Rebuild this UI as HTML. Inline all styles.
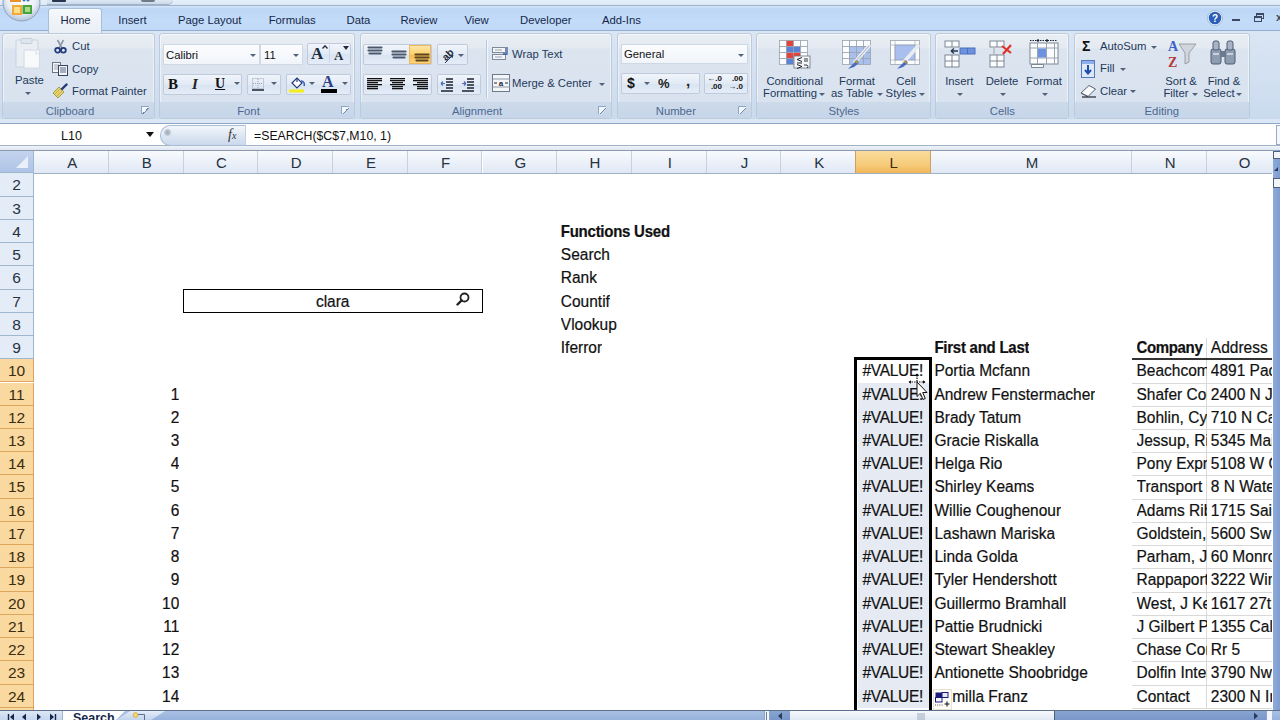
<!DOCTYPE html><html><head><meta charset="utf-8"><style>
*{margin:0;padding:0;box-sizing:border-box}
html,body{width:1280px;height:720px;overflow:hidden;background:#fff;font-family:"Liberation Sans",sans-serif;position:relative}
.a{position:absolute}
.t{position:absolute;white-space:nowrap}
.rb{font-size:11.3px;color:#1e395b}
.grp{position:absolute;top:32.5px;height:86.5px;border:1px solid #bccadb;border-radius:3px;background:linear-gradient(#e9eef4 0%,#e4eaf1 16%,#dbe4ef 18%,#d9e3ef 85%);box-shadow:inset 0 0 0 1px rgba(255,255,255,.5)}
.glab{position:absolute;left:0;right:0;bottom:0;height:16px;background:linear-gradient(#cddaea,#c6d5e9);text-align:center;font-size:11.3px;line-height:18px;color:#4d6890;border-radius:0 0 2px 2px}.glab.l{padding-right:17px}
.launch{position:absolute;right:5px;bottom:4px;width:8px;height:8px;border-left:1px solid #8ba6c8;border-top:1px solid #8ba6c8;background:linear-gradient(135deg,#f3f7fc 50%,#6f87a8 50%,#6f87a8 62%,transparent 62%)}
.btn{position:absolute;border:1px solid #bfcbdc;border-radius:2px;background:linear-gradient(#f1f5fb,#e2eaf5 50%,#d9e4f2 51%,#e4ecf7)}
.dd{position:absolute;width:0;height:0;border-left:3px solid transparent;border-right:3px solid transparent;border-top:3px solid #52617a}
.hdr{position:absolute;top:151px;height:22.3px;padding-left:2px;background:linear-gradient(#f8fafd,#e9eff8 60%,#e0e8f4);border-right:1px solid #c5d1de;text-align:center;font-size:15px;line-height:23px;color:#27313f}
.rh{position:absolute;left:0;width:34px;background:#e4ecf7;border-bottom:1px solid #9eb6ce;border-right:1px solid #9eb6ce;text-align:center;font-size:15.5px;color:#27313f}.rh span{display:inline-block;transform:translateY(-0.5px)}
.rh.s{background:#f9d99f;border-bottom-color:#dca65c;border-right-color:#d9a456;color:#3a2d10}
.c{position:absolute;white-space:nowrap;font-size:15.5px;color:#111;overflow:hidden;-webkit-text-stroke:0.2px #111;transform:scaleY(1.06)}
</style></head><body>

<div class="a" style="left:0;top:0;width:1280px;height:5px;background:linear-gradient(#e6f0fa,#dce9f6)"></div>
<div class="a" style="left:0;top:5px;width:1280px;height:1px;background:#9fb2c8"></div>
<div class="a" style="left:0;top:6px;width:1280px;height:25px;background:linear-gradient(#d6e6f8 0px,#bcd6f5 3px,#c3dcf9 60%,#c0d9f6)"></div>
<div class="a" style="left:47px;top:0;width:126px;height:5px;background:linear-gradient(#dfe8f3,#cbd9ea);border-bottom:1px solid #9fb2cc;border-radius:0 0 8px 0"></div>
<div class="a" style="left:52px;top:0;width:14px;height:2px;background:#27374f;border-radius:0 0 1px 1px"></div>
<div class="a" style="left:141px;top:0;width:14px;height:2px;background:#56606e;border-radius:0 0 3px 3px;opacity:.8"></div>
<svg class="a" style="left:0;top:-15px" width="44" height="38" viewBox="0 0 44 38">
<defs><radialGradient id="ob" cx="50%" cy="40%" r="60%"><stop offset="0" stop-color="#ffffff"/><stop offset="0.65" stop-color="#e9eff7"/><stop offset="1" stop-color="#b3c3d8"/></radialGradient></defs>
<circle cx="21.5" cy="17.5" r="18.5" fill="url(#ob)" stroke="#8fa2ba" stroke-width="1"/>
<rect x="10" y="13" width="11" height="4" fill="#e8922a"/><circle cx="24" cy="15" r="1.5" fill="#3a6fc8"/><circle cx="28" cy="15" r="1.5" fill="#3a6fc8"/>
<rect x="12" y="20" width="10" height="10" fill="#f2a93a"/><rect x="14" y="22" width="6" height="6" fill="#ffe08a"/>
<rect x="22.5" y="20" width="9.5" height="9" fill="#4aa33a"/><rect x="25" y="22" width="5" height="5" fill="#a6dc8e"/>
</svg>
<div class="t rb" style="left:60.5px;top:13px;line-height:14px;color:#15284b">Home</div>
<div class="t rb" style="left:118.3px;top:13px;line-height:14px;color:#15284b">Insert</div>
<div class="t rb" style="left:178px;top:13px;line-height:14px;color:#15284b">Page Layout</div>
<div class="t rb" style="left:268.7px;top:13px;line-height:14px;color:#15284b">Formulas</div>
<div class="t rb" style="left:346.5px;top:13px;line-height:14px;color:#15284b">Data</div>
<div class="t rb" style="left:400.4px;top:13px;line-height:14px;color:#15284b">Review</div>
<div class="t rb" style="left:464.4px;top:13px;line-height:14px;color:#15284b">View</div>
<div class="t rb" style="left:520px;top:13px;line-height:14px;color:#15284b">Developer</div>
<div class="t rb" style="left:602px;top:13px;line-height:14px;color:#15284b">Add-Ins</div>
<svg class="a" style="left:1207px;top:10px" width="16" height="16" viewBox="0 0 16 16"><circle cx="8" cy="8" r="7" fill="#2b5fb8" stroke="#e9f1fb" stroke-width="1.4"/><circle cx="8" cy="8" r="7.6" fill="none" stroke="#8aa2c4" stroke-width=".6"/><text x="8" y="12" font-size="10" font-weight="bold" text-anchor="middle" fill="#fff" font-family="Liberation Sans">?</text></svg>
<div class="a" style="left:1232px;top:19px;width:8px;height:2px;background:#3b4a62"></div>
<div class="a" style="left:1256px;top:13px;width:8px;height:6px;border:1px solid #3b4a62;border-top-width:2px"></div>
<div class="a" style="left:1254px;top:15.5px;width:8px;height:6px;border:1px solid #3b4a62;border-top-width:2px;background:#c3dcf9"></div>
<div class="a" style="left:1276px;top:13px;width:6px;height:9px;font-size:11px;line-height:9px;color:#3b4a62;font-weight:bold">x</div>
<div class="a" style="left:0;top:31px;width:1280px;height:92px;background:linear-gradient(#dbe6f4,#cfdef0 70%,#c9daee);"></div>
<div class="a" style="left:0;top:30.3px;width:1280px;height:1.2px;background:#93add0"></div>
<div class="a" style="left:0;top:119px;width:1280px;height:4px;background:#dbe7f5"></div>
<div class="a" style="left:0;top:123px;width:1280px;height:1px;background:#8ea6c5"></div>
<div class="a" style="left:48px;top:8px;width:54px;height:24.5px;border:1px solid #a9bfd9;border-bottom:none;border-radius:3px 3px 0 0;background:linear-gradient(#f5f8fc,#eaeff5);z-index:2"></div>
<div class="t rb" style="left:60.5px;top:13px;line-height:14px;color:#15284b;z-index:3">Home</div>
<div class="grp" style="left:2px;width:153px"><div class="glab l">Clipboard</div><div class="launch"></div></div>
<div class="grp" style="left:159px;width:196px"><div class="glab l">Font</div><div class="launch"></div></div>
<div class="grp" style="left:359.5px;width:252.10000000000002px"><div class="glab l">Alignment</div><div class="launch"></div></div>
<div class="grp" style="left:616.7px;width:135.29999999999995px"><div class="glab l">Number</div><div class="launch"></div></div>
<div class="grp" style="left:756.4px;width:175.0px"><div class="glab">Styles</div></div>
<div class="grp" style="left:935.3px;width:134.0px"><div class="glab">Cells</div></div>
<div class="grp" style="left:1073.7px;width:176.29999999999995px"><div class="glab">Editing</div></div>
<svg class="a" style="left:15px;top:38px" width="26" height="31" viewBox="0 0 26 31"><rect x="1" y="2" width="22" height="27" rx="1" fill="#e9eef5" stroke="#c9d3de"/><rect x="6" y="0.5" width="11" height="5" rx="1" fill="#dfe5ec" stroke="#c4ced9"/><path d="M9 12 H24.5 V30 H9 Z" fill="#f7f9fb" stroke="#d3dae3"/><path d="M20 12 L24.5 16.5 H20Z" fill="#e3e8ee"/></svg>
<div class="t rb" style="left:15px;top:74.3px;line-height:13px;">Paste</div>
<div class="dd" style="left:25px;top:91.5px;border-top-color:#52617a"></div>
<svg class="a" style="left:54px;top:39px" width="13" height="15" viewBox="0 0 13 15"><path d="M3.5 1 L8 9 M9.5 1 L5 9" stroke="#8e98a6" stroke-width="1.6"/><circle cx="3.6" cy="11.2" r="2.4" fill="none" stroke="#223a7a" stroke-width="1.8"/><circle cx="9.4" cy="11.2" r="2.4" fill="none" stroke="#223a7a" stroke-width="1.8"/></svg>
<div class="t rb" style="left:72px;top:40.3px;line-height:13px;">Cut</div>
<svg class="a" style="left:52px;top:62px" width="17" height="14" viewBox="0 0 17 14"><rect x="0.5" y="0.5" width="8" height="10" fill="#f4f6f9" stroke="#6b7686"/><path d="M2 3h5M2 5h5M2 7h5" stroke="#8b95a3" stroke-width=".8"/><rect x="6.5" y="3.5" width="9" height="10" fill="#f4f6f9" stroke="#34455e"/><path d="M8 6h6M8 8h6M8 10h6" stroke="#445571" stroke-width=".9"/></svg>
<div class="t rb" style="left:72px;top:63.3px;line-height:13px;">Copy</div>
<svg class="a" style="left:52px;top:83px" width="18" height="16" viewBox="0 0 18 16"><path d="M1 10 L7 4 L12 9 L6 15 Z" fill="#e4d26a" stroke="#9a8a34" stroke-width=".8"/><path d="M3 11 L8 6 M5 13 L10 8" stroke="#b9a546" stroke-width=".8"/><path d="M10 6 L14.5 1.5" stroke="#223a7a" stroke-width="2.4" stroke-linecap="round"/></svg>
<div class="t rb" style="left:72px;top:84.8px;line-height:13px;">Format Painter</div>
<div class="a" style="left:163px;top:44px;width:97px;height:21px;border:1px solid #cfd9e6;background:linear-gradient(#fbfcfe,#f1f5fa)"></div>
<div class="t rb" style="left:166px;top:48.6px;line-height:13px;color:#111">Calibri</div>
<div class="dd" style="left:250px;top:54px;border-top-color:#52617a"></div>
<div class="a" style="left:260px;top:44px;width:43px;height:21px;border:1px solid #cfd9e6;background:linear-gradient(#fbfcfe,#f1f5fa)"></div>
<div class="t rb" style="left:264px;top:48.6px;line-height:13px;color:#111">11</div>
<div class="dd" style="left:293px;top:54px;border-top-color:#52617a"></div>
<div class="btn" style="left:307px;top:43px;width:44px;height:22px"></div>
<div class="a" style="left:329px;top:45px;width:1px;height:18px;background:#cbd8ea"></div>
<div class="t" style="left:311px;top:44px;font-family:'Liberation Serif',serif;font-weight:bold;font-size:17px;line-height:20px;color:#1e2b3e">A</div>
<svg class="a" style="left:322px;top:45px" width="6" height="4" viewBox="0 0 6 4"><path d="M0.5 3.5 L3 0.8 L5.5 3.5" fill="none" stroke="#1e2b3e" stroke-width="1.3"/></svg>
<div class="t" style="left:334px;top:48px;font-family:'Liberation Serif',serif;font-weight:bold;font-size:13px;line-height:16px;color:#1e2b3e">A</div>
<svg class="a" style="left:343px;top:46px" width="6" height="4" viewBox="0 0 6 4"><path d="M0 0 L6 0 L3 4Z" fill="#1e2b3e"/></svg>
<div class="btn" style="left:163px;top:74px;width:79px;height:21px"></div>
<div class="t" style="left:168px;top:75px;font-family:'Liberation Serif',serif;font-weight:bold;font-size:15px;line-height:18px;color:#111">B</div>
<div class="t" style="left:192px;top:75px;font-family:'Liberation Serif',serif;font-style:italic;font-weight:bold;font-size:15px;line-height:18px;color:#222">I</div>
<div class="t" style="left:215px;top:75px;font-family:'Liberation Serif',serif;font-weight:bold;font-size:14px;line-height:18px;color:#111;text-decoration:underline">U</div>
<div class="dd" style="left:234px;top:82px;border-top-color:#52617a"></div>
<div class="btn" style="left:247px;top:74px;width:34px;height:21px"></div>
<svg class="a" style="left:252px;top:78px" width="12" height="13" viewBox="0 0 12 13"><rect x="0.5" y="0.5" width="11" height="10" fill="none" stroke="#98a6b8" stroke-dasharray="1 1"/><path d="M6 1v9M1 5.5h10" stroke="#98a6b8" stroke-dasharray="1 1"/><path d="M0 12h12" stroke="#1b2433" stroke-width="1.5"/></svg>
<div class="dd" style="left:271px;top:82px;border-top-color:#52617a"></div>
<div class="btn" style="left:286px;top:74px;width:65px;height:21px"></div>
<svg class="a" style="left:288px;top:76px" width="18" height="17" viewBox="0 0 18 17"><path d="M4 7 L9 2 L14 7 L9 12 Z" fill="#fff" stroke="#223a7a" stroke-width="1.2"/><path d="M9 2 V6" stroke="#223a7a" stroke-width="1.2"/><path d="M13 5 C16 5 17 8 16 10" stroke="#3b5fc4" stroke-width="1.6" fill="none"/><rect x="1" y="13.5" width="15" height="3" fill="#f3ee1a"/></svg>
<div class="dd" style="left:309px;top:82px;border-top-color:#52617a"></div>
<div class="t" style="left:322px;top:73px;font-family:'Liberation Serif',serif;font-weight:bold;font-size:16px;line-height:17px;color:#2a3f86">A</div>
<div class="a" style="left:321px;top:88.5px;width:16px;height:4px;background:#000"></div>
<div class="dd" style="left:342px;top:82px;border-top-color:#52617a"></div>
<div class="btn" style="left:363px;top:44px;width:69px;height:21px"></div>
<div class="a" style="left:409px;top:45px;width:22px;height:19px;background:linear-gradient(#fde6a8,#fbcf6a 50%,#f7b94a 51%,#fcd57f);border:1px solid #f0b75a"></div>
<svg class="a" style="left:367px;top:46px" width="16" height="10" viewBox="0 0 16 10"><path d="M1.5 1.5h13M1.5 4.5h13M2.5 7.5h11" stroke="#4a586e" stroke-width="2.2" stroke-linecap="round"/></svg>
<svg class="a" style="left:391px;top:50px" width="16" height="10" viewBox="0 0 16 10"><path d="M1.5 1.5h13M1.5 4.5h13M2.5 7.5h11" stroke="#4a586e" stroke-width="2.2" stroke-linecap="round"/></svg>
<svg class="a" style="left:414px;top:53px" width="16" height="10" viewBox="0 0 16 10"><path d="M1.5 1.5h13M1.5 4.5h13M2.5 7.5h11" stroke="#5b4620" stroke-width="2.2" stroke-linecap="round"/></svg>
<div class="btn" style="left:437px;top:44px;width:31px;height:21px"></div>
<svg class="a" style="left:439px;top:46px" width="22" height="18" viewBox="0 0 22 18"><g transform="rotate(-45 9 9)"><text x="9" y="12" font-size="10" font-weight="bold" text-anchor="middle" fill="#1d2533" font-family="Liberation Sans">ab</text></g><path d="M6 17 L14 9" stroke="#2b3a52" stroke-width="1"/><path d="M14 9l-1 3M14 9l-3 1" stroke="#2b3a52" stroke-width="1"/></svg>
<div class="dd" style="left:458px;top:54px;border-top-color:#52617a"></div>
<div class="btn" style="left:363px;top:74px;width:69px;height:21px"></div>
<svg class="a" style="left:367px;top:78px" width="16" height="13" viewBox="0 0 16 13"><rect x="0" y="0" width="15" height="1.3" fill="#111"/><rect x="0" y="2" width="15" height="1.3" fill="#111"/><rect x="0" y="4" width="11" height="1.3" fill="#111"/><rect x="0" y="6" width="15" height="1.3" fill="#111"/><rect x="0" y="8" width="11" height="1.3" fill="#111"/><rect x="0" y="10" width="11" height="1.3" fill="#111"/></svg>
<svg class="a" style="left:390px;top:78px" width="16" height="13" viewBox="0 0 16 13"><rect x="0.0" y="0" width="15" height="1.3" fill="#111"/><rect x="0.0" y="2" width="15" height="1.3" fill="#111"/><rect x="2.0" y="4" width="11" height="1.3" fill="#111"/><rect x="0.0" y="6" width="15" height="1.3" fill="#111"/><rect x="2.0" y="8" width="11" height="1.3" fill="#111"/><rect x="2.0" y="10" width="11" height="1.3" fill="#111"/></svg>
<svg class="a" style="left:413px;top:78px" width="16" height="13" viewBox="0 0 16 13"><rect x="0" y="0" width="15" height="1.3" fill="#111"/><rect x="0" y="2" width="15" height="1.3" fill="#111"/><rect x="4" y="4" width="11" height="1.3" fill="#111"/><rect x="0" y="6" width="15" height="1.3" fill="#111"/><rect x="4" y="8" width="11" height="1.3" fill="#111"/><rect x="4" y="10" width="11" height="1.3" fill="#111"/></svg>
<div class="btn" style="left:437px;top:74px;width:44px;height:21px"></div>
<svg class="a" style="left:440px;top:77px" width="14" height="15" viewBox="0 0 14 15"><path d="M6 2h7M6 5h7M6 8h7M6 11h7M1 14h12" stroke="#1d2533" stroke-width="1.3"/><path d="M5 6.5 L1 6.5 M1 6.5 L3 4.5 M1 6.5 L3 8.5" stroke="#4c6cb8" stroke-width="1.2"/></svg>
<svg class="a" style="left:461px;top:77px" width="14" height="15" viewBox="0 0 14 15"><path d="M6 2h7M6 5h7M6 8h7M6 11h7M1 14h12" stroke="#1d2533" stroke-width="1.3"/><path d="M1 6.5 L5 6.5 M5 6.5 L3 4.5 M5 6.5 L3 8.5" stroke="#4c6cb8" stroke-width="1.2"/></svg>
<div class="a" style="left:485.5px;top:40px;width:1px;height:58px;background:#b7c9e0;box-shadow:1px 0 0 #f2f7fd"></div>
<svg class="a" style="left:492px;top:45px" width="19" height="17" viewBox="0 0 19 17"><rect x="0.5" y="2.5" width="13" height="5" fill="#f3f5f8" stroke="#7e8a99"/><rect x="0.5" y="9.5" width="13" height="5" fill="#f3f5f8" stroke="#7e8a99"/><path d="M3 5h7M3 12h7" stroke="#9aa4b2"/><path d="M15 2 V9 H11" fill="none" stroke="#3a5aa8" stroke-width="1.3"/></svg>
<div class="t rb" style="left:512px;top:48.3px;line-height:13px;">Wrap Text</div>
<svg class="a" style="left:492px;top:74px" width="19" height="19" viewBox="0 0 19 19"><rect x="0.5" y="0.5" width="17" height="17" fill="#f3f5f8" stroke="#6e7a8a"/><path d="M1 5h17M1 13h17" stroke="#8d98a6"/><text x="9" y="12" font-size="8" text-anchor="middle" fill="#1d2533" font-family="Liberation Sans" font-weight="bold">a</text><path d="M2 9h3M16 9h-3" stroke="#1d2533"/></svg>
<div class="t rb" style="left:512px;top:77.3px;line-height:13px;">Merge &amp; Center</div>
<div class="dd" style="left:599px;top:83px;border-top-color:#52617a"></div>
<div class="a" style="left:621px;top:44px;width:127px;height:20px;border:1px solid #cfd9e6;background:linear-gradient(#fbfcfe,#f1f5fa)"></div>
<div class="t rb" style="left:624px;top:48.3px;line-height:13px;color:#111">General</div>
<div class="dd" style="left:738px;top:54px;border-top-color:#52617a"></div>
<div class="btn" style="left:621px;top:73px;width:79px;height:21px"></div>
<div class="t" style="left:627px;top:75px;font-weight:bold;font-size:14px;line-height:17px;color:#111">$</div>
<div class="dd" style="left:644px;top:82px;border-top-color:#52617a"></div>
<div class="t" style="left:658px;top:76px;font-weight:bold;font-size:13px;line-height:16px;color:#222">%</div>
<div class="t" style="left:686px;top:72px;font-weight:bold;font-size:15px;line-height:17px;color:#222">,</div>
<div class="btn" style="left:704px;top:73px;width:44px;height:21px"></div>
<div class="t" style="left:707px;top:75px;font-weight:bold;font-size:8px;line-height:8px;color:#111;text-align:right;width:15px">&#8592;.0<br>.00</div>
<div class="t" style="left:728px;top:75px;font-weight:bold;font-size:8px;line-height:8px;color:#111;text-align:right;width:15px">.00<br>&#8594;.0</div>
<svg class="a" style="left:779px;top:40px" width="32" height="29" viewBox="0 0 32 29"><rect x="0.5" y="0.5" width="7" height="6" fill="#fbfcfd" stroke="#9aa3ae" stroke-width="0.8"/><rect x="7.5" y="0.5" width="7" height="6" fill="#e8413a" stroke="#9aa3ae" stroke-width="0.8"/><rect x="14.5" y="0.5" width="7" height="6" fill="#fbfcfd" stroke="#9aa3ae" stroke-width="0.8"/><rect x="21.5" y="0.5" width="7" height="6" fill="#fbfcfd" stroke="#9aa3ae" stroke-width="0.8"/><rect x="0.5" y="6.5" width="7" height="6" fill="#fbfcfd" stroke="#9aa3ae" stroke-width="0.8"/><rect x="7.5" y="6.5" width="7" height="6" fill="#5a82d8" stroke="#9aa3ae" stroke-width="0.8"/><rect x="14.5" y="6.5" width="7" height="6" fill="#5a82d8" stroke="#9aa3ae" stroke-width="0.8"/><rect x="21.5" y="6.5" width="7" height="6" fill="#fbfcfd" stroke="#9aa3ae" stroke-width="0.8"/><rect x="0.5" y="12.5" width="7" height="6" fill="#fbfcfd" stroke="#9aa3ae" stroke-width="0.8"/><rect x="7.5" y="12.5" width="7" height="6" fill="#e8413a" stroke="#9aa3ae" stroke-width="0.8"/><rect x="14.5" y="12.5" width="7" height="6" fill="#e8413a" stroke="#9aa3ae" stroke-width="0.8"/><rect x="21.5" y="12.5" width="7" height="6" fill="#fbfcfd" stroke="#9aa3ae" stroke-width="0.8"/><rect x="0.5" y="18.5" width="7" height="6" fill="#fbfcfd" stroke="#9aa3ae" stroke-width="0.8"/><rect x="7.5" y="18.5" width="7" height="6" fill="#5a82d8" stroke="#9aa3ae" stroke-width="0.8"/><rect x="14.5" y="18.5" width="7" height="6" fill="#fbfcfd" stroke="#9aa3ae" stroke-width="0.8"/><rect x="21.5" y="18.5" width="7" height="6" fill="#fbfcfd" stroke="#9aa3ae" stroke-width="0.8"/><rect x="15" y="16" width="16" height="12" fill="#f4f5f7" stroke="#6b7380" stroke-width=".8"/><path d="M23 17.5l-5 2 5 2M18 23h5M18 24.5l5 2-5 2" fill="none" stroke="#1d2533" stroke-width="1"/><path d="M25 19h4M25 21h4M25 25h3l1 1.5-1 1.5" fill="none" stroke="#1d2533" stroke-width=".9"/></svg>
<div class="t rb" style="left:734.7px;width:120px;text-align:center;top:74.8px;line-height:13px;">Conditional</div>
<div class="t rb" style="left:730px;width:120px;text-align:center;top:87.3px;line-height:13px;">Formatting</div>
<div class="dd" style="left:819px;top:93px;border-top-color:#52617a"></div>
<svg class="a" style="left:842px;top:40px" width="30" height="30" viewBox="0 0 30 30"><rect x="0.5" y="0.5" width="7" height="6" fill="#fbfcfd" stroke="#9aa3ae" stroke-width="0.8"/><rect x="7.5" y="0.5" width="7" height="6" fill="#fbfcfd" stroke="#9aa3ae" stroke-width="0.8"/><rect x="14.5" y="0.5" width="7" height="6" fill="#fbfcfd" stroke="#9aa3ae" stroke-width="0.8"/><rect x="21.5" y="0.5" width="7" height="6" fill="#fbfcfd" stroke="#9aa3ae" stroke-width="0.8"/><rect x="0.5" y="6.5" width="7" height="6" fill="#fbfcfd" stroke="#9aa3ae" stroke-width="0.8"/><rect x="7.5" y="6.5" width="7" height="6" fill="#a9c0ef" stroke="#9aa3ae" stroke-width="0.8"/><rect x="14.5" y="6.5" width="7" height="6" fill="#a9c0ef" stroke="#9aa3ae" stroke-width="0.8"/><rect x="21.5" y="6.5" width="7" height="6" fill="#a9c0ef" stroke="#9aa3ae" stroke-width="0.8"/><rect x="0.5" y="12.5" width="7" height="6" fill="#fbfcfd" stroke="#9aa3ae" stroke-width="0.8"/><rect x="7.5" y="12.5" width="7" height="6" fill="#a9c0ef" stroke="#9aa3ae" stroke-width="0.8"/><rect x="14.5" y="12.5" width="7" height="6" fill="#a9c0ef" stroke="#9aa3ae" stroke-width="0.8"/><rect x="21.5" y="12.5" width="7" height="6" fill="#a9c0ef" stroke="#9aa3ae" stroke-width="0.8"/><rect x="0.5" y="18.5" width="7" height="6" fill="#fbfcfd" stroke="#9aa3ae" stroke-width="0.8"/><rect x="7.5" y="18.5" width="7" height="6" fill="#a9c0ef" stroke="#9aa3ae" stroke-width="0.8"/><rect x="14.5" y="18.5" width="7" height="6" fill="#a9c0ef" stroke="#9aa3ae" stroke-width="0.8"/><rect x="21.5" y="18.5" width="7" height="6" fill="#a9c0ef" stroke="#9aa3ae" stroke-width="0.8"/><path d="M27 6 L13 22" stroke="#e9ecf0" stroke-width="3.5" stroke-linecap="round"/><path d="M27 6 L13 22" stroke="#8d96a3" stroke-width="0.7"/><path d="M15 20 L9 26 L6 29 L12 27 L17 23Z" fill="#4a6bc0"/><path d="M13 21 L16 23" stroke="#b59a3a" stroke-width="2"/></svg>
<div class="t rb" style="left:797px;width:120px;text-align:center;top:74.8px;line-height:13px;">Format</div>
<div class="t rb" style="left:792px;width:120px;text-align:center;top:87.3px;line-height:13px;">as Table</div>
<div class="dd" style="left:876.5px;top:93px;border-top-color:#52617a"></div>
<svg class="a" style="left:890px;top:40px" width="30" height="30" viewBox="0 0 30 30"><rect x="0.5" y="0.5" width="29" height="24" fill="#fbfcfd" stroke="#9aa3ae" stroke-width=".8"/><rect x="5" y="5" width="20" height="15" fill="#a9c0ef" stroke="#8aa0c8" stroke-width=".6"/><path d="M5 0.5V24.5M25 0.5V24.5M0.5 5H29.5M0.5 20H29.5" stroke="#9aa3ae" stroke-width=".6"/><path d="M28 6 L14 22" stroke="#e9ecf0" stroke-width="3.5" stroke-linecap="round"/><path d="M16 20 L10 26 L7 29 L13 27 L18 23Z" fill="#4a6bc0"/><path d="M14 21 L17 23" stroke="#b59a3a" stroke-width="2"/></svg>
<div class="t rb" style="left:846px;width:120px;text-align:center;top:74.8px;line-height:13px;">Cell</div>
<div class="t rb" style="left:841px;width:120px;text-align:center;top:87.3px;line-height:13px;">Styles</div>
<div class="dd" style="left:919px;top:93px;border-top-color:#52617a"></div>
<svg class="a" style="left:944px;top:40px" width="32" height="28" viewBox="0 0 32 28"><rect x="1" y="1" width="14" height="6" fill="#fbfcfd" stroke="#7e8794"/><path d="M8 1v6" stroke="#7e8794"/><rect x="1" y="15" width="14" height="12" fill="#fbfcfd" stroke="#7e8794"/><path d="M8 15v12M1 21h14" stroke="#7e8794"/><rect x="16" y="8" width="15" height="6" fill="#6d93e0" stroke="#4c6fb8"/><path d="M23.5 8v6" stroke="#4c6fb8"/><path d="M7 11h7M7 11l3-2.5M7 11l3 2.5" stroke="#2b3a52" stroke-width="1.4"/></svg>
<div class="t rb" style="left:899.3px;width:120px;text-align:center;top:74.8px;line-height:13px;">Insert</div>
<div class="dd" style="left:956.5px;top:92.5px;border-top-color:#52617a"></div>
<svg class="a" style="left:989px;top:40px" width="26" height="28" viewBox="0 0 26 28"><rect x="1" y="1" width="14" height="6" fill="#fbfcfd" stroke="#7e8794"/><path d="M8 1v6" stroke="#7e8794"/><rect x="1" y="15" width="14" height="12" fill="#fbfcfd" stroke="#7e8794"/><path d="M8 15v12M1 21h14" stroke="#7e8794"/><path d="M5 8v6" stroke="#9aa3ae"/><path d="M13 6 L22 13 M22 5 L14 14" stroke="#e0332a" stroke-width="2.2"/></svg>
<div class="t rb" style="left:942px;width:120px;text-align:center;top:74.8px;line-height:13px;">Delete</div>
<div class="dd" style="left:999.5px;top:92.5px;border-top-color:#52617a"></div>
<svg class="a" style="left:1029px;top:39px" width="32" height="30" viewBox="0 0 32 30"><rect x="1" y="4" width="28" height="21" fill="#fbfcfd" stroke="#7e8794"/><path d="M8.5 4v21M17.5 4v21M25.5 4v21M1 9h28M1 19h28" stroke="#9aa3ae"/><rect x="9" y="9.5" width="8" height="9" fill="#6d93e0"/><path d="M1 1.5h27" stroke="#1d2533" stroke-dasharray="1.5 1" stroke-width="1.2"/><circle cx="9" cy="1.5" r="1.2" fill="#1d2533"/><circle cx="18" cy="1.5" r="1.2" fill="#1d2533"/><path d="M2.5 25.5h12v3h-12z" fill="#fbfcfd" stroke="#7e8794"/></svg>
<div class="t rb" style="left:984px;width:120px;text-align:center;top:74.8px;line-height:13px;">Format</div>
<div class="dd" style="left:1041.5px;top:92.5px;border-top-color:#52617a"></div>
<div class="t" style="left:1082px;top:39px;font-family:'Liberation Sans',sans-serif;font-weight:bold;font-size:14px;line-height:14px;color:#111">&#931;</div>
<div class="t rb" style="left:1100px;top:40.3px;line-height:13px;">AutoSum</div>
<div class="dd" style="left:1151px;top:46px;border-top-color:#52617a"></div>
<svg class="a" style="left:1081px;top:60px" width="14" height="18" viewBox="0 0 14 18"><rect x="0.5" y="0.5" width="13" height="17" fill="#dfe8f7" stroke="#5479c0"/><rect x="1" y="1" width="12" height="3" fill="#8eb0ea"/><path d="M7 5v8M4 10l3 3.5 3-3.5" stroke="#1f4fae" stroke-width="2" fill="none"/></svg>
<div class="t rb" style="left:1100px;top:62.3px;line-height:13px;">Fill</div>
<div class="dd" style="left:1120px;top:68px;border-top-color:#52617a"></div>
<svg class="a" style="left:1080px;top:84px" width="17" height="14" viewBox="0 0 17 14"><path d="M1 9 L9 1.5 L15.5 5 L8 12.5 Z" fill="#fbfcfd" stroke="#555e6a"/><path d="M1 9 L8 12.5" stroke="#555e6a"/><path d="M2 13h14" stroke="#20262e" stroke-width="1.2"/></svg>
<div class="t rb" style="left:1100px;top:84.8px;line-height:13px;">Clear</div>
<div class="dd" style="left:1130px;top:90px;border-top-color:#52617a"></div>
<svg class="a" style="left:1167px;top:39px" width="30" height="30" viewBox="0 0 30 30"><text x="1" y="12" font-size="14" font-family="Liberation Serif" font-weight="bold" fill="#3a63c8">A</text><text x="1" y="28" font-size="14" font-family="Liberation Serif" font-weight="bold" fill="#b23a3a">Z</text><path d="M12 5 H29 L22 14 V23 L18 25 V14 Z" fill="#d2d6dc" stroke="#8a9098" stroke-width=".8"/></svg>
<div class="t rb" style="left:1121px;width:120px;text-align:center;top:74.8px;line-height:13px;">Sort &amp;</div>
<div class="t rb" style="left:1116px;width:120px;text-align:center;top:87.3px;line-height:13px;">Filter</div>
<div class="dd" style="left:1192px;top:93px;border-top-color:#52617a"></div>
<svg class="a" style="left:1209px;top:39px" width="28" height="28" viewBox="0 0 28 28"><rect x="2" y="10" width="10" height="15" rx="2" fill="#8e9cb0" stroke="#4f5d72"/><rect x="16" y="10" width="10" height="15" rx="2" fill="#8e9cb0" stroke="#4f5d72"/><rect x="4" y="2" width="6" height="9" rx="2" fill="#a9b5c6" stroke="#4f5d72"/><rect x="18" y="2" width="6" height="9" rx="2" fill="#a9b5c6" stroke="#4f5d72"/><rect x="11" y="12" width="6" height="6" fill="#6c7a8f"/><path d="M4 15h6M18 15h6" stroke="#dde3ea" stroke-width="1.5"/></svg>
<div class="t rb" style="left:1164px;width:120px;text-align:center;top:74.8px;line-height:13px;">Find &amp;</div>
<div class="t rb" style="left:1159px;width:120px;text-align:center;top:87.3px;line-height:13px;">Select</div>
<div class="dd" style="left:1236px;top:93px;border-top-color:#52617a"></div>
<div class="a" style="left:0;top:124px;width:1280px;height:22px;background:#fff"></div>
<div class="a" style="left:0;top:145px;width:1280px;height:1px;background:#a3b3c6"></div>
<div class="a" style="left:0;top:146px;width:1280px;height:4px;background:linear-gradient(#eef3f9,#dfe7f1)"></div>
<div class="a" style="left:0;top:149.5px;width:1280px;height:1.6px;background:#8d9aab"></div>
<div class="t" style="left:0;top:129px;width:143px;text-align:center;font-size:12.5px;line-height:15px;color:#111">L10</div>
<svg class="a" style="left:146px;top:132px" width="8" height="5" viewBox="0 0 8 5"><path d="M0 0H8L4 5Z" fill="#111"/></svg>
<div class="a" style="left:160px;top:125px;width:86px;height:20.5px;border-radius:10px 0 0 10px;background:linear-gradient(#f3f7fc,#dbe5f2 55%,#cbd9ec);border:1px solid #a9bcd6;border-right:1px solid #c3d0e0"></div>
<div class="a" style="left:164px;top:129px;width:7px;height:7px;border-radius:50%;background:radial-gradient(#9aa6b4,#c7d1dd 70%,transparent)"></div>
<div class="t" style="left:228px;top:126px;font-family:'Liberation Serif',serif;font-style:italic;font-size:14px;line-height:17px;color:#333">f<span style="font-size:10px">x</span></div>
<div class="t" style="left:254px;top:128.5px;font-size:12.3px;line-height:15px;color:#111">=SEARCH($C$7,M10, 1)</div>
<div class="a" style="left:1276px;top:125px;width:6px;height:20px;border:1px solid #9aaac0;background:#f4f7fb"></div>
<div class="a" style="left:0;top:151px;width:34px;height:22.3px;background:linear-gradient(#c3d4ee,#aec4e6);border-right:1px solid #9eb6ce;border-bottom:1px solid #9eb6ce"></div>
<svg class="a" style="left:16px;top:156px" width="13" height="13" viewBox="0 0 13 13"><path d="M12 0 V12 H0 Z" fill="#e9f0fa"/></svg>
<div class="hdr" style="left:34.3px;width:74.7px">A</div>
<div class="hdr" style="left:109.0px;width:74.7px">B</div>
<div class="hdr" style="left:183.7px;width:74.7px">C</div>
<div class="hdr" style="left:258.4px;width:74.7px">D</div>
<div class="hdr" style="left:333.1px;width:74.7px">E</div>
<div class="hdr" style="left:407.8px;width:74.7px">F</div>
<div class="hdr" style="left:482.5px;width:74.7px">G</div>
<div class="hdr" style="left:557.2px;width:74.7px">H</div>
<div class="hdr" style="left:631.9px;width:74.7px">I</div>
<div class="hdr" style="left:706.6px;width:74.7px">J</div>
<div class="hdr" style="left:781.3px;width:74.7px">K</div>
<div class="hdr" style="left:854.7px;width:75.9px;background:linear-gradient(#f9dc9c,#f6cc7c 60%,#f2b65a);border-right:1px solid #c9a062;border-left:1px solid #c9a062;color:#3d2c0c">L</div>
<div class="hdr" style="left:930.6px;width:201.8px">M</div>
<div class="hdr" style="left:1132.4px;width:74.7px">N</div>
<div class="hdr" style="left:1207.1px;width:73.9px">O</div>
<div class="a" style="left:33px;top:172.5px;width:1239px;height:1px;background:#9fb0c4"></div>
<div class="rh" style="top:173.3px;height:23.24px;line-height:23.24px"><span>2</span></div>
<div class="rh" style="top:196.5px;height:23.24px;line-height:23.24px"><span>3</span></div>
<div class="rh" style="top:219.8px;height:23.24px;line-height:23.24px"><span>4</span></div>
<div class="rh" style="top:243.0px;height:23.24px;line-height:23.24px"><span>5</span></div>
<div class="rh" style="top:266.3px;height:23.24px;line-height:23.24px"><span>6</span></div>
<div class="rh" style="top:289.5px;height:23.24px;line-height:23.24px"><span>7</span></div>
<div class="rh" style="top:312.7px;height:23.24px;line-height:23.24px"><span>8</span></div>
<div class="rh" style="top:336.0px;height:23.24px;line-height:23.24px"><span>9</span></div>
<div class="rh s" style="top:359.2px;height:23.24px;line-height:23.24px"><span>10</span></div>
<div class="rh s" style="top:382.5px;height:23.24px;line-height:23.24px"><span>11</span></div>
<div class="rh s" style="top:405.7px;height:23.24px;line-height:23.24px"><span>12</span></div>
<div class="rh s" style="top:428.9px;height:23.24px;line-height:23.24px"><span>13</span></div>
<div class="rh s" style="top:452.2px;height:23.24px;line-height:23.24px"><span>14</span></div>
<div class="rh s" style="top:475.4px;height:23.24px;line-height:23.24px"><span>15</span></div>
<div class="rh s" style="top:498.7px;height:23.24px;line-height:23.24px"><span>16</span></div>
<div class="rh s" style="top:521.9px;height:23.24px;line-height:23.24px"><span>17</span></div>
<div class="rh s" style="top:545.1px;height:23.24px;line-height:23.24px"><span>18</span></div>
<div class="rh s" style="top:568.4px;height:23.24px;line-height:23.24px"><span>19</span></div>
<div class="rh s" style="top:591.6px;height:23.24px;line-height:23.24px"><span>20</span></div>
<div class="rh s" style="top:614.9px;height:23.24px;line-height:23.24px"><span>21</span></div>
<div class="rh s" style="top:638.1px;height:23.24px;line-height:23.24px"><span>22</span></div>
<div class="rh s" style="top:661.3px;height:23.24px;line-height:23.24px"><span>23</span></div>
<div class="rh s" style="top:684.6px;height:23.24px;line-height:23.24px"><span>24</span></div>
<div class="rh s" style="top:707.8px;height:4px;border-bottom:none"></div>
<div class="a" style="left:183px;top:289.2px;width:299.5px;height:24px;border:1.6px solid #000"></div>
<div class="c" style="left:232.7px;width:200px;text-align:center;top:289.5px;line-height:23.24px;">clara</div>
<svg class="a" style="left:456px;top:292px" width="14" height="15" viewBox="0 0 14 15"><circle cx="8.5" cy="5.5" r="4" fill="none" stroke="#222" stroke-width="1.8"/><path d="M5.6 8.4 L1.5 12.5" stroke="#222" stroke-width="2.4" stroke-linecap="round"/></svg>
<div class="c" style="left:560.8px;top:219.8px;line-height:23.24px;font-weight:bold;letter-spacing:-0.25px;font-size:15px">Functions Used</div>
<div class="c" style="left:560.8px;top:243.0px;line-height:23.24px;">Search</div>
<div class="c" style="left:560.8px;top:266.3px;line-height:23.24px;">Rank</div>
<div class="c" style="left:560.8px;top:289.5px;line-height:23.24px;">Countif</div>
<div class="c" style="left:560.8px;top:312.7px;line-height:23.24px;">Vlookup</div>
<div class="c" style="left:560.8px;top:336.0px;line-height:23.24px;">Iferror</div>
<div class="c" style="left:-20.69999999999999px;width:200px;text-align:right;top:382.5px;line-height:23.24px;">1</div>
<div class="c" style="left:-20.69999999999999px;width:200px;text-align:right;top:405.7px;line-height:23.24px;">2</div>
<div class="c" style="left:-20.69999999999999px;width:200px;text-align:right;top:428.9px;line-height:23.24px;">3</div>
<div class="c" style="left:-20.69999999999999px;width:200px;text-align:right;top:452.2px;line-height:23.24px;">4</div>
<div class="c" style="left:-20.69999999999999px;width:200px;text-align:right;top:475.4px;line-height:23.24px;">5</div>
<div class="c" style="left:-20.69999999999999px;width:200px;text-align:right;top:498.7px;line-height:23.24px;">6</div>
<div class="c" style="left:-20.69999999999999px;width:200px;text-align:right;top:521.9px;line-height:23.24px;">7</div>
<div class="c" style="left:-20.69999999999999px;width:200px;text-align:right;top:545.1px;line-height:23.24px;">8</div>
<div class="c" style="left:-20.69999999999999px;width:200px;text-align:right;top:568.4px;line-height:23.24px;">9</div>
<div class="c" style="left:-20.69999999999999px;width:200px;text-align:right;top:591.6px;line-height:23.24px;">10</div>
<div class="c" style="left:-20.69999999999999px;width:200px;text-align:right;top:614.9px;line-height:23.24px;">11</div>
<div class="c" style="left:-20.69999999999999px;width:200px;text-align:right;top:638.1px;line-height:23.24px;">12</div>
<div class="c" style="left:-20.69999999999999px;width:200px;text-align:right;top:661.3px;line-height:23.24px;">13</div>
<div class="c" style="left:-20.69999999999999px;width:200px;text-align:right;top:684.6px;line-height:23.24px;">14</div>
<div class="a" style="left:1132.4px;top:382.5px;width:139.5999999999999px;height:1px;background:#d9d9d9"></div>
<div class="a" style="left:1132.4px;top:405.7px;width:139.5999999999999px;height:1px;background:#d9d9d9"></div>
<div class="a" style="left:1132.4px;top:428.9px;width:139.5999999999999px;height:1px;background:#d9d9d9"></div>
<div class="a" style="left:1132.4px;top:452.2px;width:139.5999999999999px;height:1px;background:#d9d9d9"></div>
<div class="a" style="left:1132.4px;top:475.4px;width:139.5999999999999px;height:1px;background:#d9d9d9"></div>
<div class="a" style="left:1132.4px;top:498.7px;width:139.5999999999999px;height:1px;background:#d9d9d9"></div>
<div class="a" style="left:1132.4px;top:521.9px;width:139.5999999999999px;height:1px;background:#d9d9d9"></div>
<div class="a" style="left:1132.4px;top:545.1px;width:139.5999999999999px;height:1px;background:#d9d9d9"></div>
<div class="a" style="left:1132.4px;top:568.4px;width:139.5999999999999px;height:1px;background:#d9d9d9"></div>
<div class="a" style="left:1132.4px;top:591.6px;width:139.5999999999999px;height:1px;background:#d9d9d9"></div>
<div class="a" style="left:1132.4px;top:614.9px;width:139.5999999999999px;height:1px;background:#d9d9d9"></div>
<div class="a" style="left:1132.4px;top:638.1px;width:139.5999999999999px;height:1px;background:#d9d9d9"></div>
<div class="a" style="left:1132.4px;top:661.3px;width:139.5999999999999px;height:1px;background:#d9d9d9"></div>
<div class="a" style="left:1132.4px;top:684.6px;width:139.5999999999999px;height:1px;background:#d9d9d9"></div>
<div class="a" style="left:1132.4px;top:707.8px;width:139.5999999999999px;height:1px;background:#d9d9d9"></div>
<div class="a" style="left:1206.1px;top:338.0px;width:1px;height:370.0px;background:#d9d9d9"></div>
<div class="a" style="left:1132.4px;top:357.7px;width:139.5999999999999px;height:2.3px;background:#333"></div>
<div class="a" style="left:857.5px;top:382.5px;width:71px;height:325.5px;background:#e6eaf3;z-index:-0"></div>
<div class="c" style="left:934.4px;top:336.0px;line-height:23.24px;font-weight:bold;letter-spacing:-0.25px;font-size:15px">First and Last</div>
<div class="c" style="left:1136.5px;top:336.0px;line-height:23.24px;font-weight:bold;letter-spacing:-0.35px;font-size:15px;width:70.59999999999991px">Company</div>
<div class="c" style="left:1210.8px;top:336.0px;line-height:23.24px;width:61.200000000000045px">Address</div>
<div class="c" style="left:792.8px;width:200px;text-align:center;top:359.2px;line-height:23.24px;letter-spacing:-0.3px">#VALUE!</div>
<div class="c" style="left:934.4px;top:359.2px;line-height:23.24px;">Portia Mcfann</div>
<div class="c" style="left:1136.5px;top:359.2px;line-height:23.24px;width:70.59999999999991px">Beachcomber Inn</div>
<div class="c" style="left:1210.8px;top:359.2px;line-height:23.24px;width:61.200000000000045px">4891 Pacific</div>
<div class="c" style="left:792.8px;width:200px;text-align:center;top:382.5px;line-height:23.24px;letter-spacing:-0.3px">#VALUE!</div>
<div class="c" style="left:934.4px;top:382.5px;line-height:23.24px;">Andrew Fenstermacher</div>
<div class="c" style="left:1136.5px;top:382.5px;line-height:23.24px;width:70.59999999999991px">Shafer Corp</div>
<div class="c" style="left:1210.8px;top:382.5px;line-height:23.24px;width:61.200000000000045px">2400 N Jones</div>
<div class="c" style="left:792.8px;width:200px;text-align:center;top:405.7px;line-height:23.24px;letter-spacing:-0.3px">#VALUE!</div>
<div class="c" style="left:934.4px;top:405.7px;line-height:23.24px;">Brady Tatum</div>
<div class="c" style="left:1136.5px;top:405.7px;line-height:23.24px;width:70.59999999999991px">Bohlin, Cy</div>
<div class="c" style="left:1210.8px;top:405.7px;line-height:23.24px;width:61.200000000000045px">710 N Cass</div>
<div class="c" style="left:792.8px;width:200px;text-align:center;top:428.9px;line-height:23.24px;letter-spacing:-0.3px">#VALUE!</div>
<div class="c" style="left:934.4px;top:428.9px;line-height:23.24px;">Gracie Riskalla</div>
<div class="c" style="left:1136.5px;top:428.9px;line-height:23.24px;width:70.59999999999991px">Jessup, Richard</div>
<div class="c" style="left:1210.8px;top:428.9px;line-height:23.24px;width:61.200000000000045px">5345 Main</div>
<div class="c" style="left:792.8px;width:200px;text-align:center;top:452.2px;line-height:23.24px;letter-spacing:-0.3px">#VALUE!</div>
<div class="c" style="left:934.4px;top:452.2px;line-height:23.24px;">Helga Rio</div>
<div class="c" style="left:1136.5px;top:452.2px;line-height:23.24px;width:70.59999999999991px">Pony Express</div>
<div class="c" style="left:1210.8px;top:452.2px;line-height:23.24px;width:61.200000000000045px">5108 W Oak</div>
<div class="c" style="left:792.8px;width:200px;text-align:center;top:475.4px;line-height:23.24px;letter-spacing:-0.3px">#VALUE!</div>
<div class="c" style="left:934.4px;top:475.4px;line-height:23.24px;">Shirley Keams</div>
<div class="c" style="left:1136.5px;top:475.4px;line-height:23.24px;width:70.59999999999991px">Transport Co</div>
<div class="c" style="left:1210.8px;top:475.4px;line-height:23.24px;width:61.200000000000045px">8 N Water</div>
<div class="c" style="left:792.8px;width:200px;text-align:center;top:498.7px;line-height:23.24px;letter-spacing:-0.3px">#VALUE!</div>
<div class="c" style="left:934.4px;top:498.7px;line-height:23.24px;">Willie Coughenour</div>
<div class="c" style="left:1136.5px;top:498.7px;line-height:23.24px;width:70.59999999999991px">Adams Rib</div>
<div class="c" style="left:1210.8px;top:498.7px;line-height:23.24px;width:61.200000000000045px">1715 Saint</div>
<div class="c" style="left:792.8px;width:200px;text-align:center;top:521.9px;line-height:23.24px;letter-spacing:-0.3px">#VALUE!</div>
<div class="c" style="left:934.4px;top:521.9px;line-height:23.24px;">Lashawn Mariska</div>
<div class="c" style="left:1136.5px;top:521.9px;line-height:23.24px;width:70.59999999999991px">Goldstein, A</div>
<div class="c" style="left:1210.8px;top:521.9px;line-height:23.24px;width:61.200000000000045px">5600 Sw</div>
<div class="c" style="left:792.8px;width:200px;text-align:center;top:545.1px;line-height:23.24px;letter-spacing:-0.3px">#VALUE!</div>
<div class="c" style="left:934.4px;top:545.1px;line-height:23.24px;">Linda Golda</div>
<div class="c" style="left:1136.5px;top:545.1px;line-height:23.24px;width:70.59999999999991px">Parham, J</div>
<div class="c" style="left:1210.8px;top:545.1px;line-height:23.24px;width:61.200000000000045px">60 Monroe</div>
<div class="c" style="left:792.8px;width:200px;text-align:center;top:568.4px;line-height:23.24px;letter-spacing:-0.3px">#VALUE!</div>
<div class="c" style="left:934.4px;top:568.4px;line-height:23.24px;">Tyler Hendershott</div>
<div class="c" style="left:1136.5px;top:568.4px;line-height:23.24px;width:70.59999999999991px">Rappaport Inc</div>
<div class="c" style="left:1210.8px;top:568.4px;line-height:23.24px;width:61.200000000000045px">3222 Windy</div>
<div class="c" style="left:792.8px;width:200px;text-align:center;top:591.6px;line-height:23.24px;letter-spacing:-0.3px">#VALUE!</div>
<div class="c" style="left:934.4px;top:591.6px;line-height:23.24px;">Guillermo Bramhall</div>
<div class="c" style="left:1136.5px;top:591.6px;line-height:23.24px;width:70.59999999999991px">West, J Kelly</div>
<div class="c" style="left:1210.8px;top:591.6px;line-height:23.24px;width:61.200000000000045px">1617 27th</div>
<div class="c" style="left:792.8px;width:200px;text-align:center;top:614.9px;line-height:23.24px;letter-spacing:-0.3px">#VALUE!</div>
<div class="c" style="left:934.4px;top:614.9px;line-height:23.24px;">Pattie Brudnicki</div>
<div class="c" style="left:1136.5px;top:614.9px;line-height:23.24px;width:70.59999999999991px">J Gilbert P</div>
<div class="c" style="left:1210.8px;top:614.9px;line-height:23.24px;width:61.200000000000045px">1355 Cal</div>
<div class="c" style="left:792.8px;width:200px;text-align:center;top:638.1px;line-height:23.24px;letter-spacing:-0.3px">#VALUE!</div>
<div class="c" style="left:934.4px;top:638.1px;line-height:23.24px;">Stewart Sheakley</div>
<div class="c" style="left:1136.5px;top:638.1px;line-height:23.24px;width:70.59999999999991px">Chase Con</div>
<div class="c" style="left:1210.8px;top:638.1px;line-height:23.24px;width:61.200000000000045px">Rr 5</div>
<div class="c" style="left:792.8px;width:200px;text-align:center;top:661.3px;line-height:23.24px;letter-spacing:-0.3px">#VALUE!</div>
<div class="c" style="left:934.4px;top:661.3px;line-height:23.24px;">Antionette Shoobridge</div>
<div class="c" style="left:1136.5px;top:661.3px;line-height:23.24px;width:70.59999999999991px">Dolfin Inter</div>
<div class="c" style="left:1210.8px;top:661.3px;line-height:23.24px;width:61.200000000000045px">3790 Nw</div>
<div class="c" style="left:792.8px;width:200px;text-align:center;top:684.6px;line-height:23.24px;letter-spacing:-0.3px">#VALUE!</div>
<div class="c" style="left:952.2px;top:684.6px;line-height:23.24px;">milla Franz</div>
<div class="c" style="left:1136.5px;top:684.6px;line-height:23.24px;width:70.59999999999991px">Contact</div>
<div class="c" style="left:1210.8px;top:684.6px;line-height:23.24px;width:61.200000000000045px">2300 N Irving</div>
<div class="a" style="left:854px;top:357.3px;width:78px;height:360px;border:3.4px solid #000;border-bottom:none"></div>
<div class="a" style="left:1272.5px;top:150px;width:8px;height:561px;background:linear-gradient(90deg,#8eaad8,#7c9bd1)"></div>
<div class="a" style="left:1272.5px;top:151px;width:8px;height:7.5px;background:#f0f4f9;border:1px solid #4f5f78;border-right:none"></div>
<svg class="a" style="left:1274px;top:166px" width="6" height="6" viewBox="0 0 6 6"><path d="M0 5l4-4v4z" fill="#2a3a58"/></svg>
<div class="a" style="left:1272.5px;top:177.5px;width:8px;height:10px;background:#f2f5fa;border:1px solid #4f5f78;border-right:none"></div>
<div class="a" style="left:0;top:710.5px;width:1280px;height:9.5px;background:linear-gradient(#a9c0e3,#97b2dc)"></div>
<div class="a" style="left:0;top:709.8px;width:1280px;height:1.4px;background:#5d6f8a"></div>
<div class="a" style="left:0;top:711px;width:63px;height:9px;background:linear-gradient(#dde7f5,#c6d6ee);border-right:1px solid #9fb3cf"></div>
<svg class="a" style="left:0px;top:711px" width="64" height="9" viewBox="0 0 64 9"><path d="M8.5 3v6" stroke="#15284b" stroke-width="1.4"/><path d="M10 6l4-3.5v7z" fill="#15284b"/><path d="M22 6l4-3.5v7z" fill="#15284b"/><path d="M37 2.5v7l4-3.5z" fill="#15284b"/><path d="M50 2.5v7l4-3.5z" fill="#15284b"/><path d="M55.5 3v6" stroke="#15284b" stroke-width="1.4"/></svg>
<div class="a" style="left:63px;top:711px;width:62px;height:9px;background:#fff;clip-path:polygon(0 0,100% 0,calc(100% - 9px) 100%,0 100%)"></div>
<div class="t" style="left:73px;top:710.5px;font-size:12.5px;font-weight:bold;line-height:14px;color:#15284b">Search</div>
<div class="a" style="left:116px;top:710.5px;width:50px;height:9.5px;background:linear-gradient(#e4ecf8,#c2d3ec);clip-path:polygon(15px 0,100% 0,calc(100% - 15px) 100%,0 100%)"></div>
<svg class="a" style="left:131px;top:711px" width="18" height="9" viewBox="0 0 18 9"><circle cx="4.5" cy="4" r="2.4" fill="#f5d66a" stroke="#c9a43a" stroke-width=".7"/><path d="M7 3.5h6.5v6" fill="none" stroke="#5a6f92" stroke-width="1"/></svg>
<div class="a" style="left:763.5px;top:711px;width:6.5px;height:9px;background:#f1f5fb;border-left:1px solid #8fa4c2;border-right:1px solid #8fa4c2"></div>
<div class="a" style="left:766px;top:712px;width:1px;height:8px;background:#6d7f99"></div>
<div class="a" style="left:770px;top:711px;width:502px;height:9px;background:linear-gradient(#87a4d2,#7896c8)"></div>
<svg class="a" style="left:776px;top:712px" width="8" height="8" viewBox="0 0 8 8"><path d="M2 4l4-3.5v7z" fill="#2a3a58"/></svg>
<div class="a" style="left:789.5px;top:711px;width:265px;height:9px;background:linear-gradient(#f6f9fc,#e2e9f4);border-right:1.2px solid #4c5e7c"></div>
<svg class="a" style="left:917px;top:713px" width="10" height="7" viewBox="0 0 10 7"><path d="M1 0v7M3 0v7M5 0v7M7 0v7" stroke="#8d9bb0" stroke-width=".8"/></svg>
<svg class="a" style="left:1252px;top:712px" width="8" height="8" viewBox="0 0 8 8"><path d="M6 4l-4-3.5v7z" fill="#2a3a58"/></svg>
<div class="a" style="left:1266px;top:711px;width:6px;height:9px;background:#f1f5fb;border-left:1px solid #8fa4c2"></div>
<svg class="a" style="left:933px;top:689px" width="19" height="21" viewBox="0 0 19 21"><rect x="0.5" y="0.5" width="18" height="20" fill="#fdfcf8" stroke="#e9e3cf"/><rect x="2.5" y="3.5" width="6.5" height="5" fill="#1a1a7a"/><rect x="9" y="3.5" width="6" height="5" fill="#e8eaf8" stroke="#1a1a7a" stroke-width="1"/><rect x="2.5" y="8.5" width="6.5" height="4.5" fill="#f4f4fb" stroke="#1a1a7a" stroke-width="1"/><path d="M2 16h8" stroke="#555" stroke-dasharray="1 1.2"/><path d="M14 12.5v5M11.5 15h5" stroke="#111" stroke-width="1.1"/></svg>
<svg class="a" style="left:906px;top:372px" width="24" height="30" viewBox="0 0 24 30"><path d="M11 3 V10 M3 10 H19" stroke="#111" stroke-width="1.2" stroke-dasharray="1.5 1"/><circle cx="11" cy="3" r="1.3" fill="#111"/><path d="M2.5 10 L5 8.3 V11.7Z M19.5 10 L17 8.3 V11.7Z" fill="#111"/><path d="M11 10 L11 24.5 L14.3 21.3 L17 27.5 L19.3 26.5 L16.7 20.5 L21 20.5 Z" fill="#fff" stroke="#111" stroke-width="1"/></svg>
</body></html>
